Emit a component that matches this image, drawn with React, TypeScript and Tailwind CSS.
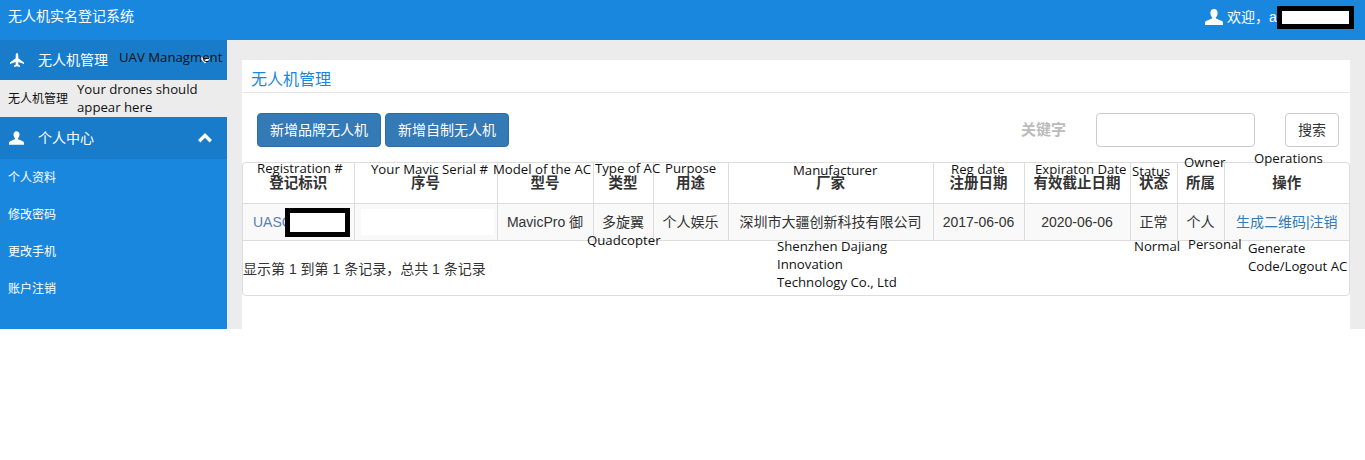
import React from 'react';

const columns = [
    { title: '登记标识', width: 'w-[111px]' },
    { title: '序号', width: 'w-[143px]' },
    { title: '型号', width: 'w-[96px]' },
    { title: '类型', width: 'w-[60px]' },
    { title: '用途', width: 'w-[75px]' },
    { title: '厂家', width: 'w-[205px]' },
    { title: '注册日期', width: 'w-[91px]' },
    { title: '有效截止日期', width: 'w-[106px]' },
    { title: '状态', width: 'w-[47px]' },
    { title: '所属', width: 'w-[47px]' },
    { title: '操作', width: 'w-[125px]' },
];

const subMenu = ['个人资料', '修改密码', '更改手机', '账户注销'];

// overlays typed onto the screenshot, placed where they were pasted
const notes = [
    { text: 'UAV Managment', className: 'left-[119px] top-[48px]' },
    { text: 'Your drones should', className: 'left-[77px] top-[80px]' },
    { text: 'appear here', className: 'left-[77px] top-[98px]' },
    { text: 'Registration #', className: 'left-[257px] top-[159px]' },
    { text: 'Your Mavic Serial #', className: 'left-[371px] top-[160px]' },
    { text: 'Model of the AC', className: 'left-[493px] top-[160px]' },
    { text: 'Type of AC', className: 'left-[595px] top-[159px]' },
    { text: 'Purpose', className: 'left-[665px] top-[159px]' },
    { text: 'Manufacturer', className: 'left-[793px] top-[161px]' },
    { text: 'Reg date', className: 'left-[951px] top-[160px]' },
    { text: 'Expiraton Date', className: 'left-[1035px] top-[160px]' },
    { text: 'Status', className: 'left-[1132px] top-[162px]' },
    { text: 'Owner', className: 'left-[1184px] top-[153px]' },
    { text: 'Operations', className: 'left-[1254px] top-[149px]' },
    { text: 'Quadcopter', className: 'left-[587px] top-[231px]' },
    { text: 'Shenzhen Dajiang', className: 'left-[777px] top-[237px]' },
    { text: 'Innovation', className: 'left-[777px] top-[255px]' },
    { text: 'Technology Co., Ltd', className: 'left-[777px] top-[273px]' },
    { text: 'Normal', className: 'left-[1134px] top-[237px]' },
    { text: 'Personal', className: 'left-[1188px] top-[235px]' },
    { text: 'Generate', className: 'left-[1248px] top-[239px]' },
    { text: 'Code/Logout AC', className: 'left-[1248px] top-[257px]' },
];

const UserIcon = ({ className }: { className: string }) => (
    <svg viewBox="0 0 18 16" className={className} fill="currentColor">
        <path d="M9 0c2.3 0 3.6 1.6 3.6 3.9 0 1.7-.7 3.3-1.6 4.3-.3.4-.3 1 .1 1.3.5.4 1.7.8 3.4 1.4 1.9.7 3.5 1.3 3.5 2.6V16H0v-2.5c0-1.3 1.6-1.9 3.5-2.6 1.7-.6 2.9-1 3.4-1.4.4-.3.4-.9.1-1.3-.9-1-1.6-2.6-1.6-4.3C5.4 1.6 6.7 0 9 0z" />
    </svg>
);

const PlaneIcon = () => (
    <svg viewBox="0 0 14 14" className="w-[14px] h-[14px]" fill="currentColor">
        <path d="M7 0c.8 0 1.3 1.3 1.3 2.5v2.7L14 9.6V11L8.3 9v2.5l1.7 1.3V14l-3-.7-3 .7v-1.2l1.7-1.3V9L0 11V9.6l5.7-4.4V2.5C5.7 1.3 6.2 0 7 0z" />
    </svg>
);

const ChevronUp = ({ className }: { className: string }) => (
    <svg viewBox="0 0 14 10" className={className} fill="currentColor">
        <path d="M7 0l7 7-2.4 2.4L7 4.8 2.4 9.4 0 7z" />
    </svg>
);

const App: React.FC = () => {
    return (
        <div className="relative w-[1365px] h-[460px] overflow-hidden bg-white text-[14px] text-[#333] font-['Liberation_Sans','Noto_Sans_CJK_SC',sans-serif]">
            <header className="h-[40px] bg-[#1a87df] text-white flex justify-between pl-[8px] pr-[12px]">
                <div className="pt-[6px] leading-[20px]">无人机实名登记系统</div>
                <div className="flex items-start pt-[7px] leading-[20px]">
                    <UserIcon className="w-[18px] h-[16px] mt-[2px] mr-[4px]" />
                    <span className="w-[126px]">{'欢迎\uFF0Ca'}</span>
                </div>
            </header>

            <div className="flex h-[289px]">
                <aside className="w-[227px] shrink-0 bg-[#1a87df] text-white">
                    <div className="h-[40px] bg-[#187ccb] flex items-center justify-between pl-[10px] pr-[17px]">
                        <div className="flex items-center">
                            <PlaneIcon />
                            <span className="ml-[14px] mt-[1px]">无人机管理</span>
                        </div>
                        <ChevronUp className="w-[10px] h-[8px] rotate-180" />
                    </div>
                    <div className="h-[37px] bg-[#ececec] text-[#111] text-[12px] flex items-center pl-[8px] pt-[1px]">
                        无人机管理
                    </div>
                    <div className="h-[42px] bg-[#187ccb] flex items-center justify-between pl-[9px] pr-[15px]">
                        <div className="flex items-center">
                            <UserIcon className="w-[15px] h-[14px]" />
                            <span className="ml-[14px]">个人中心</span>
                        </div>
                        <ChevronUp className="w-[14px] h-[10px]" />
                    </div>
                    <ul className="text-[12px]">
                        {subMenu.map((item) => (
                            <li key={item} className="h-[37px] flex items-center pl-[8px]">{item}</li>
                        ))}
                    </ul>
                </aside>

                <main className="flex-1 min-w-0 bg-[#ececec] pt-[20px] pl-[15px] pr-[15px]">
                    <div className="h-[269px] bg-white">
                        <div className="h-[33px] border-b border-[#e5e5e5] pl-[9px] pt-[8px] text-[16px] leading-[24px] text-[#1a87df]">
                            无人机管理
                        </div>
                        <div className="flex items-center pt-[20px] pl-[15px] pr-[11px]">
                            <button className="h-[34px] px-[12px] bg-[#337ab7] border border-[#2e6da4] rounded-[4px] text-white">新增品牌无人机</button>
                            <button className="h-[34px] px-[12px] ml-[4px] bg-[#337ab7] border border-[#2e6da4] rounded-[4px] text-white">新增自制无人机</button>
                            <label className="ml-auto font-bold text-[15px] text-[#bbb]">关键字</label>
                            <input className="w-[159px] h-[34px] ml-[30px] border border-[#ccc] rounded-[4px]" />
                            <button className="w-[54px] h-[34px] ml-[30px] bg-white border border-[#ccc] rounded-[4px]">搜索</button>
                        </div>

                        <div className="mt-[15px] h-[134px] border border-[#ddd] rounded-[4px]">
                            <table className="table-fixed border-collapse w-[1106px]">
                                <thead>
                                    <tr className="h-[40px] border-b border-[#ddd]">
                                        {columns.map((col, i) => (
                                            <th
                                                key={col.title}
                                                className={`${col.width} pt-[2px] text-center font-bold text-[14.5px] ${i > 0 ? 'border-l border-[#ddd]' : ''}`}
                                            >
                                                {col.title}
                                            </th>
                                        ))}
                                    </tr>
                                </thead>
                                <tbody>
                                    <tr className="h-[37px] bg-[#f9f9f9] border-b border-[#ddd] text-center [&>td]:pt-[1px]">
                                        <td className="pl-[10px] text-left text-[#5a7fb5]">UASC</td>
                                        <td className="border-l border-[#ddd] px-[6px]">
                                            <div className="h-[26px] w-[133px] bg-white" />
                                        </td>
                                        <td className="border-l border-[#ddd]">MavicPro 御</td>
                                        <td className="border-l border-[#ddd]">多旋翼</td>
                                        <td className="border-l border-[#ddd]">个人娱乐</td>
                                        <td className="border-l border-[#ddd]">深圳市大疆创新科技有限公司</td>
                                        <td className="border-l border-[#ddd]">2017-06-06</td>
                                        <td className="border-l border-[#ddd]">2020-06-06</td>
                                        <td className="border-l border-[#ddd]">正常</td>
                                        <td className="border-l border-[#ddd]">个人</td>
                                        <td className="border-l border-[#ddd] text-[#337ab7] whitespace-nowrap">生成二维码|注销</td>
                                    </tr>
                                </tbody>
                            </table>
                            <div className="pt-[18px] leading-[20px]">{'显示第 1 到第 1 条记录\uFF0C总共 1 条记录'}</div>
                        </div>
                    </div>
                </main>
            </div>

            {/* redaction boxes */}
            <div className="absolute left-[1277px] top-[6px] w-[77px] h-[23px] bg-white border-[5px] border-black" />
            <div className="absolute left-[285px] top-[208px] w-[65px] h-[29px] bg-white border-[5px] border-black" />

            {notes.map((note) => (
                <span
                    key={note.text}
                    className={`absolute whitespace-nowrap text-[13.2px] leading-[18px] text-[#111] font-['Open_Sans',sans-serif] ${note.className}`}
                >
                    {note.text}
                </span>
            ))}
        </div>
    );
};

export default App;
